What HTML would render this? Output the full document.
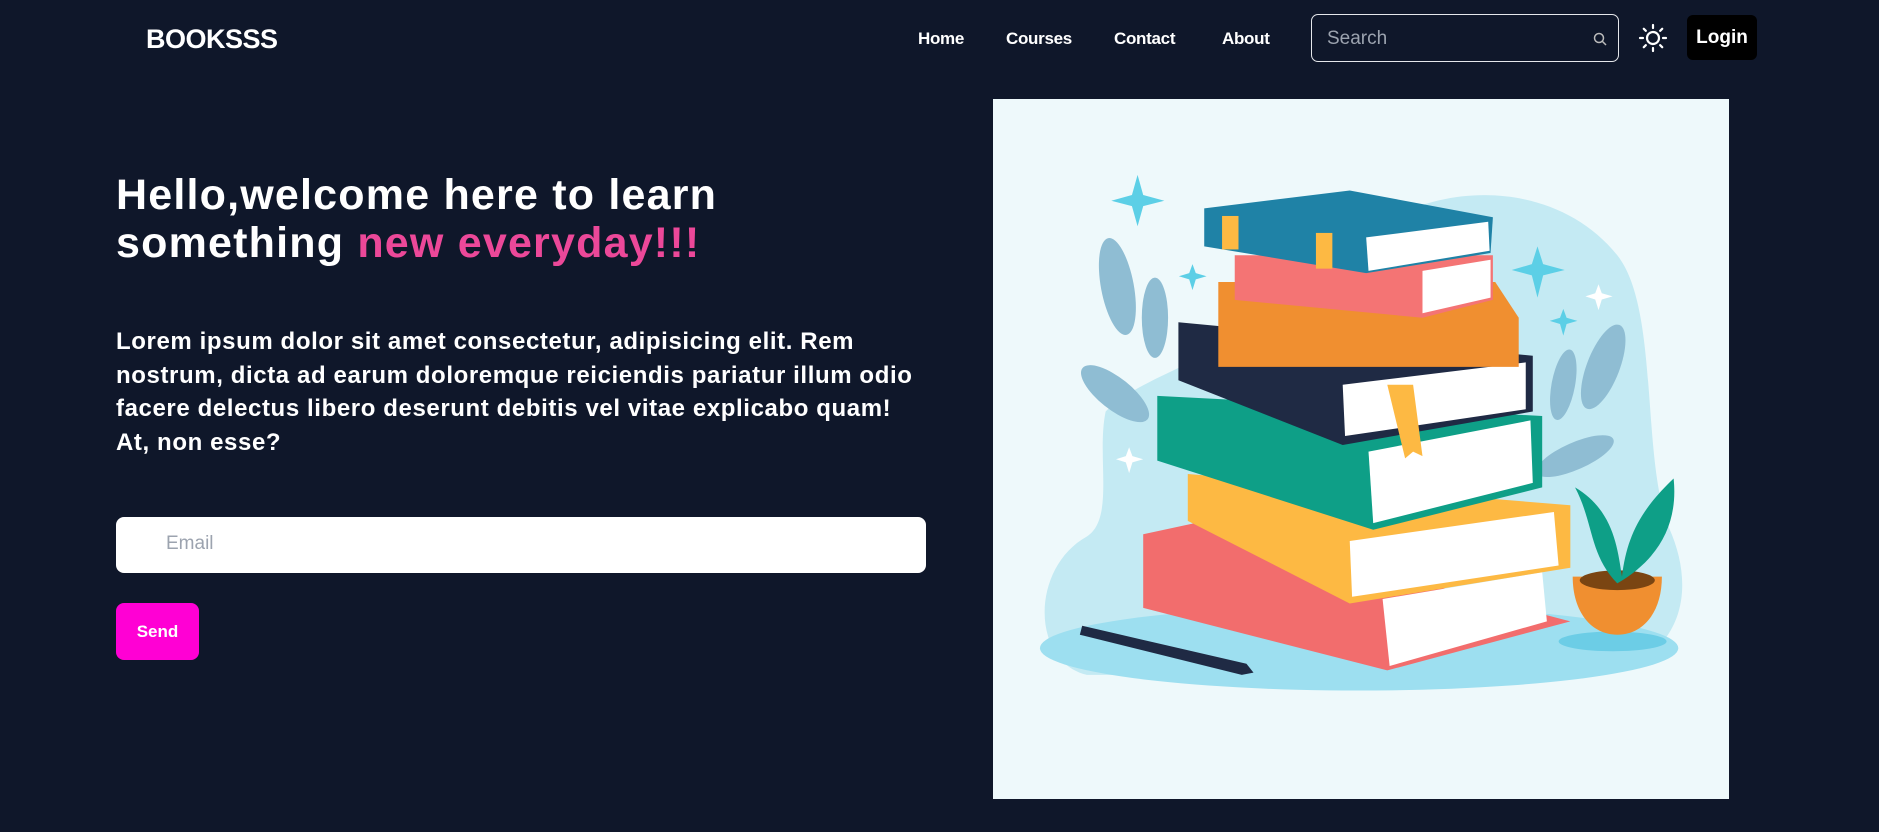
<!DOCTYPE html>
<html><head><meta charset="utf-8"><style>
*{margin:0;padding:0;box-sizing:border-box}
body{width:1879px;height:832px;background:#0f172a;font-family:"Liberation Sans",sans-serif;color:#fff;position:relative;overflow:hidden}
.a{position:absolute}
.logo{left:146px;top:24px;font-size:27px;font-weight:bold;letter-spacing:-0.5px}
.nav{top:29px;font-size:17px;font-weight:bold;letter-spacing:-0.3px}
.search{left:1311px;top:14px;width:308px;height:48px;border:1px solid #e5e7eb;border-radius:7px}
.search span{position:absolute;left:15px;top:13px;font-size:19px;color:#9ca3af}
.login{left:1687px;top:15px;width:70px;height:45px;background:#000;border-radius:6px;font-size:19px;font-weight:bold;text-align:center;line-height:45px}
h1{position:absolute;left:116px;top:171px;font-size:43px;line-height:48px;font-weight:bold;letter-spacing:1.2px;white-space:nowrap}
h1 b{color:#ec4899}
p{position:absolute;left:116px;top:325px;font-size:24px;line-height:33.7px;font-weight:bold;letter-spacing:0.6px;white-space:nowrap}
.email{left:116px;top:517px;width:810px;height:56px;background:#fff;border-radius:8px}
.email span{position:absolute;left:50px;top:16px;color:#9ca3af;font-size:19px}
.send{left:116px;top:603px;width:83px;height:57px;background:#ff00d4;border-radius:8px;font-size:17px;font-weight:bold;text-align:center;line-height:57px}
.panel{left:993px;top:99px;width:736px;height:700px;background:#eef9fb}
</style></head><body>
<div class="a logo">BOOKSSS</div>
<div class="a nav" style="left:918px">Home</div>
<div class="a nav" style="left:1006px">Courses</div>
<div class="a nav" style="left:1114px">Contact</div>
<div class="a nav" style="left:1222px">About</div>
<div class="a search"><span>Search</span>
<svg class="a" style="left:280px;top:16px" width="16" height="16" viewBox="0 0 16 16"><circle cx="7" cy="7" r="4.5" fill="none" stroke="#bbb" stroke-width="1.5"/><path d="M10.5 10.5L14 14" stroke="#bbb" stroke-width="1.5"/></svg></div>
<svg class="a" style="left:1638px;top:23px" width="30" height="30" viewBox="0 0 30 30" stroke="#fff" stroke-width="2.2" fill="none" stroke-linecap="round"><circle cx="15" cy="15" r="6"/><path d="M15 2v3M15 25v3M2 15h3M25 15h3M5.8 5.8l2 2M22.2 22.2l2 2M5.8 24.2l2-2M22.2 7.8l2-2"/></svg>
<div class="a login">Login</div>
<h1>Hello,welcome here to learn<br>something <b>new everyday!!!</b></h1>
<p>Lorem ipsum dolor sit amet consectetur, adipisicing elit. Rem<br>nostrum, dicta ad earum doloremque reiciendis pariatur illum odio<br>facere delectus libero deserunt debitis vel vitae explicabo quam!<br>At, non esse?</p>
<div class="a email"><span>Email</span></div>
<div class="a send">Send</div>
<div class="a panel">
<svg width="736" height="700" viewBox="0 0 1568 1568" preserveAspectRatio="none">
<path d="M240 700C330 600 600 560 800 300C950 180 1200 180 1330 350C1420 470 1380 800 1440 960C1500 1100 1470 1250 1300 1290L200 1290C80 1260 80 1050 200 980C260 940 220 800 240 700Z" fill="#c4eaf3"/>
<ellipse cx="780" cy="1230" rx="680" ry="95" fill="#9ddff0"/>
<ellipse cx="1320" cy="1215" rx="115" ry="22" fill="#6ccde6"/>
<g fill="#8fbdd3"><ellipse cx="265" cy="420" rx="35" ry="110" transform="rotate(-10 265 420)"/><ellipse cx="345" cy="490" rx="28" ry="90"/><ellipse cx="260" cy="660" rx="90" ry="35" transform="rotate(40 260 660)"/><ellipse cx="1300" cy="600" rx="35" ry="100" transform="rotate(20 1300 600)"/><ellipse cx="1215" cy="640" rx="25" ry="80" transform="rotate(10 1215 640)"/><ellipse cx="1240" cy="800" rx="90" ry="30" transform="rotate(-25 1240 800)"/></g>
<g fill="#5ccfe6"><path d="M308 170L320 215L365 228L320 240L308 285L296 240L252 228L296 215Z"/><path d="M1160 330L1172 370L1218 383L1172 395L1160 445L1148 395L1105 383L1148 370Z"/><path d="M425 370L432 390L455 397L432 404L425 428L418 404L396 397L418 390Z"/><path d="M1215 470L1222 490L1245 497L1222 504L1215 530L1208 504L1186 497L1208 490Z"/></g>
<g fill="#fff"><path d="M290 780L297 800L320 807L297 814L290 838L283 814L262 807L283 800Z"/><path d="M1290 415L1297 435L1320 442L1297 449L1290 473L1283 449L1262 442L1283 435Z"/></g>
<polygon points="320,975 430,950 1230,1170 840,1280 320,1140" fill="#f26d6d"/>
<polygon points="830,1120 1170,1060 1180,1170 845,1270" fill="#fff"/>
<polygon points="415,840 1230,910 1230,1050 760,1130 415,945" fill="#fdb943"/>
<polygon points="760,990 1195,925 1205,1045 765,1115" fill="#fff"/>
<polygon points="350,665 1170,710 1170,870 810,965 350,810" fill="#0e9f87"/>
<polygon points="800,790 1145,720 1150,860 810,950" fill="#fff"/>
<polygon points="395,500 1150,575 1150,700 745,775 395,630" fill="#1f2a44"/>
<polygon points="745,640 1135,590 1135,695 750,755" fill="#fff"/>
<polygon points="840,640 895,640 915,800 895,790 878,805" fill="#fdb943"/>
<polygon points="480,410 1070,410 1120,490 1120,600 480,600" fill="#f08f30"/>
<polygon points="515,350 1065,350 1065,450 915,490 515,450" fill="#f47474"/>
<polygon points="915,385 1060,360 1060,445 915,480" fill="#fff"/>
<polygon points="450,245 760,205 1065,265 1060,345 795,390 450,330" fill="#1f82a6"/>
<polygon points="795,310 1055,275 1058,340 800,385" fill="#fff"/>
<rect x="488" y="262" width="35" height="75" fill="#fdb943"/><rect x="688" y="300" width="35" height="80" fill="#fdb943"/>
<polygon points="190,1180 540,1265 555,1285 530,1290 185,1200" fill="#1f2a44"/>
<path d="M1235 1070h190c0 80-40 130-95 130s-95-50-95-130Z" fill="#f08f30"/>
<ellipse cx="1330" cy="1078" rx="80" ry="22" fill="#7a4512"/>
<path d="M1330 1085C1270 1020 1280 950 1240 870C1320 920 1330 1000 1340 1070C1350 980 1380 920 1450 850C1460 950 1420 1030 1330 1085Z" fill="#0e9f87"/>
</svg></div>
</body></html>
